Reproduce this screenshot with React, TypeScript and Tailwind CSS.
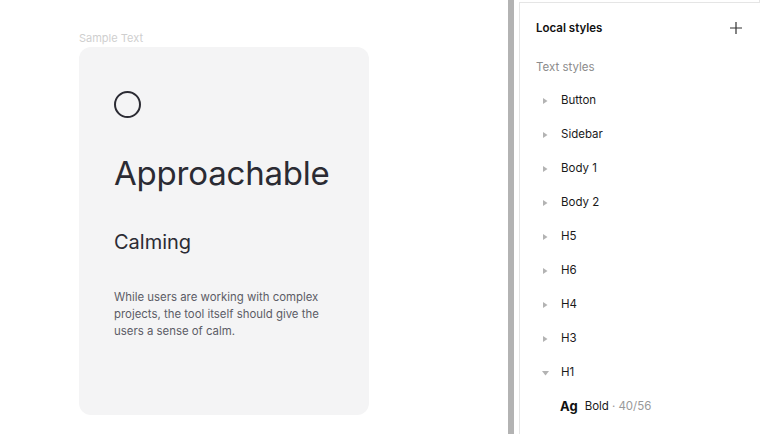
import React from "react";

const items = ["Button", "Sidebar", "Body 1", "Body 2", "H5", "H6", "H4", "H3"];

function RightTri() {
  return (
    <svg width="5" height="6" viewBox="0 0 5 6" className="block">
      <path d="M0 0 L4.5 3 L0 6 Z" fill="#b3b3b3" />
    </svg>
  );
}
function DownTri() {
  return (
    <svg width="7" height="5" viewBox="0 0 7 5" className="block">
      <path d="M0 0 L7 0 L3.5 4.5 Z" fill="#b3b3b3" />
    </svg>
  );
}

export default function App() {
  return (
    <div
      className="w-[760px] h-[434px] bg-white flex overflow-hidden"
      style={{ fontFamily: "Inter, 'Noto Sans', sans-serif" }}
    >
      <div className="w-[508px] shrink-0 pl-[79px] pt-[31px]">
        <div className="text-[11px] leading-[15px] text-[#cfcfcf]">Sample Text</div>
        <div className="mt-[1px] w-[290px] h-[368px] rounded-[12px] bg-[#f4f4f5] pl-[35px] pt-[44px] flex flex-col">
          <div className="w-[27px] h-[27px] rounded-full border-[2.5px] border-[#2b2b33]" />
          <div className="mt-[35px] text-[33px] leading-[40px] text-[#2b2b33] tracking-[-0.2px]">
            Approachable
          </div>
          <div className="mt-[37px] text-[20px] leading-[24px] text-[#2b2b33]">Calming</div>
          <div className="mt-[35px] w-[212px] text-[11.4px] leading-[17px] text-[#5c5c66]">
            While users are working with complex projects, the tool itself should give the users a sense of calm.
          </div>
        </div>
      </div>
      <div className="w-[6px] shrink-0 bg-[#b3b3b3]" />
      <div className="w-[5px] shrink-0" />
      <div className="flex-1 flex flex-col">
        <div className="h-[2px] shrink-0 border-r border-[#e5e5e5]" />
        <div className="flex-1 border-t border-l border-[#e5e5e5] flex flex-col">
          <div className="h-[50px] shrink-0 flex items-center justify-between pl-[16px] pr-[18px]">
            <span className="text-[11.5px] leading-[14px] font-semibold text-[#111]">Local styles</span>
            <svg width="12" height="12" viewBox="0 0 12 12">
              <path d="M6 0 V12 M0 6 H12" stroke="#333" strokeWidth="1.2" />
            </svg>
          </div>
          <div className="h-[31px] shrink-0 flex items-center pb-[2px] pl-[16px] text-[11.5px] text-[#8c8c8c]">
            Text styles
          </div>
          {items.map((t) => (
            <div key={t} className="h-[34px] shrink-0 flex items-center pl-[23px]">
              <div className="w-[18px] flex">
                <RightTri />
              </div>
              <span className="text-[11.5px] text-[#1a1a1a]">{t}</span>
            </div>
          ))}
          <div className="h-[34px] shrink-0 flex items-center pl-[22px]">
            <div className="w-[19px] flex">
              <DownTri />
            </div>
            <span className="text-[11.5px] text-[#1a1a1a]">H1</span>
          </div>
          <div className="h-[33px] shrink-0 flex items-center pl-[40px]">
            <span className="text-[13px] font-bold text-[#111] mr-[7px]">Ag</span>
            <span className="text-[11.5px] text-[#1a1a1a]">Bold</span>
            <span className="text-[11.5px] text-[#999] ml-[3px]">· 40/56</span>
          </div>
          <div className="h-[33px] shrink-0 flex items-center pl-[40px]">
            <span className="text-[13px] font-bold text-[#111] mr-[7px]">Ag</span>
            <span className="text-[11.5px] text-[#1a1a1a]">Regular</span>
            <span className="text-[11.5px] text-[#999] ml-[3px]">· 32/40</span>
          </div>
        </div>
      </div>
    </div>
  );
}
